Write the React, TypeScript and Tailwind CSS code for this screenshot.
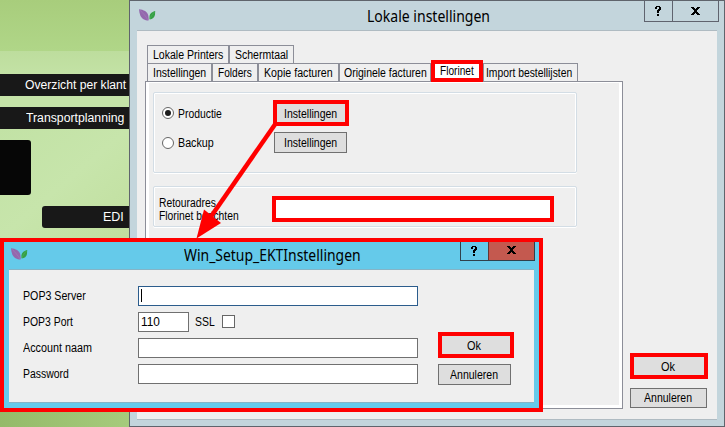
import { useLayoutEffect, useRef, useState } from "react";

/** Single line of text condensed or stretched to the width of its box. */
function Fit({ text, className }: { text: string; className: string }) {
  const inner = useRef<HTMLSpanElement>(null);
  const [scale, setScale] = useState(1);
  useLayoutEffect(() => {
    const el = inner.current;
    if (el && el.parentElement && el.offsetWidth > 0) {
      setScale(el.parentElement.clientWidth / el.offsetWidth);
    }
  }, [text]);
  return (
    <span className={`block shrink-0 whitespace-pre ${className}`}>
      <span ref={inner} className="inline-block origin-left" style={{ transform: `scaleX(${scale})` }}>
        {text}
      </span>
    </span>
  );
}

function Logo() {
  return (
    <svg width="17" height="13" viewBox="0 0 17 13" className="block shrink-0">
      <path d="M0 .3C4.500.5 8.700 3 9.300 6.500 9.600 8.500 9.900 10.200 9.500 11.500 6 11.500 2.500 9.500 1.300 6.500.5 4.500.2 2.500 0 .3Z" fill="#9468ad" />
      <path d="M1 1.200C4 4 7 7.500 9 11" stroke="#a37fb8" strokeWidth=".6" fill="none" />
      <path d="M16.200 2C13.500 2.500 10.800 4.500 10.500 7.300 10.400 8.700 10.400 9.700 10.700 10.500 13.500 10.300 15.600 8.500 16 5.800Z" fill="#35a045" />
      <path d="M15.500 3C13.500 5 11.800 7.500 10.900 10" stroke="#55b060" strokeWidth=".6" fill="none" />
    </svg>
  );
}

function HelpGlyph() {
  return (
    <svg width="7" height="10" viewBox="0 0 7 10" className="block" shapeRendering="crispEdges">
      <path d="M1 0h4v1h1v3h-1v1h-1v2h-2v-3h1v-1h1v-2h-2v2h-2v-2h1zM2 8h2v2h-2z" fill="#000" />
    </svg>
  );
}

function CloseGlyph() {
  return (
    <svg width="9" height="8" viewBox="0 0 9 8" className="block" shapeRendering="crispEdges">
      <path d="M0 0h3v1h1v1h1v-1h1v-1h3v1h-1v1h-1v1h-1v2h1v1h1v1h1v1h-3v-1h-1v-1h-1v1h-1v1h-3v-1h1v-1h1v-1h1v-2h-1v-1h-1v-1h-1z" fill="#000" />
    </svg>
  );
}

function Tab({ text, box, label }: { text: string; box: string; label: string }) {
  return (
    <div className={`flex h-[18px] shrink-0 border border-b-0 border-[#8c8e98] bg-[#efefef] leading-[18px] ${box}`}>
      <Fit text={text} className={label} />
    </div>
  );
}

function Radio({ checked }: { checked?: boolean }) {
  return (
    <span className="flex size-3 shrink-0 items-center justify-center rounded-full border border-[#666] bg-white">
      {checked && <span className="size-1.5 rounded-full bg-[#1c1c1c]" />}
    </span>
  );
}

function Desktop() {
  return (
    <div className="flex h-[427px] w-[129px] shrink-0 flex-col bg-[#c5e3a8] text-[12.5px] text-white">
      <div className="h-[51px] bg-linear-to-b from-[#a8cd7c] to-[#b0d688]" />
      <div className="h-[23px] bg-linear-to-b from-[#bddd9d] to-[#c3e2a5]" />
      <div className="flex h-[22px] justify-end bg-[#181818] pr-[3px] leading-[23px]">
        <Fit text="Overzicht per klant" className="w-[101px]" />
      </div>
      <div className="mt-[11px] flex h-[22px] justify-end bg-[#181818] pr-[5px] leading-[23px]">
        <Fit text="Transportplanning" className="w-[98px]" />
      </div>
      <div className="bg-linear-to-br from-[#c2e2a5] via-[#c7e5ab] to-[#c1df9f] pt-[11px] pb-2.5">
        <div className="h-[55px] w-[31px] rounded-r-[3px] bg-[#060606]" />
        <div className="mt-[11px] ml-[42px] flex h-[22px] justify-end rounded-l-[3px] bg-[#181818] pr-[5px] leading-[23px]">
          <Fit text="EDI" className="w-[21px]" />
        </div>
      </div>
      <div className="mt-auto h-[15px] bg-linear-to-r from-[#94ba69] to-[#a6cb7c]" />
    </div>
  );
}

function SettingsWindow() {
  return (
    <div className="flex h-[427px] w-[596px] shrink-0 flex-col border border-[#5f646c] bg-[#c3d5dc] px-[7px]">
      <div className="flex h-[29px] shrink-0">
        <div className="mt-2 ml-[2px] w-[228px]">
          <Logo />
        </div>
        <div className="font-['Noto_Sans'] text-[15.500px] leading-[31px]">
          <Fit text="Lokale instellingen" className="w-[123px]" />
        </div>
        <div className="-mr-[2px] ml-auto flex h-[21px] w-[75px] border border-t-0 border-[#5f636e]">
          <div className="flex w-7 items-center justify-center border-r border-[#5f636e]">
            <HelpGlyph />
          </div>
          <div className="flex flex-1 items-center justify-center">
            <CloseGlyph />
          </div>
        </div>
      </div>
      <div className="flex h-[390px] shrink-0 border-y border-[#afbbc2] bg-[#efefef] pl-2">
        <div className="flex w-[478px] flex-col pt-3.5">
          <div className="ml-[2px] flex">
            <Tab text="Lokale Printers" box="w-[82px] pl-[5px]" label="w-[70px]" />
            <Tab text="Schermtaal" box="w-[65px] border-r pl-[5px]" label="w-[53px]" />
          </div>
          <div className="ml-[2px] flex h-[18px] items-end">
            <Tab text="Instellingen" box="w-[65px] pl-[5px]" label="w-[53px]" />
            <Tab text="Folders" box="w-[46px] pl-[5px]" label="w-[34px]" />
            <Tab text="Kopie facturen" box="w-[81px] pl-[5px]" label="w-[69px]" />
            <Tab text="Originele facturen" box="w-[92px] pl-1" label="w-[83px]" />
            <div className="z-10 -mb-px flex h-[22px] w-[52px] shrink-0 border-4 border-[#f00] bg-white pl-[5px] leading-[14px]">
              <Fit text="Florinet" className="w-[34px]" />
            </div>
            <Tab text="Import bestellijsten" box="w-[95px] pl-[2px]" label="w-[86px]" />
          </div>
          <div className="h-[328px] border border-[#8c8e98] bg-white px-[3px] pt-px pb-[3px]">
            <div className="h-full bg-[#efefef] pt-[9px] pl-1">
              <div className="h-[81px] w-[424px] rounded-[2px] border border-[#d3dde5] pt-[7px] pl-2 shadow-[inset_0_1px_0_#fff,inset_1px_0_0_#fff,inset_-1px_0_0_#fff,0_1px_0_#fff]">
                <div className="flex h-[26px] items-center">
                  <Radio checked />
                  <Fit text="Productie" className="ml-1 w-11 pt-[2px]" />
                  <div className="ml-[51px] flex h-[26px] w-[76px] border-4 border-[#f00] bg-[#dedede] pl-[7px] leading-[20px]">
                    <Fit text="Instellingen" className="w-[53px]" />
                  </div>
                </div>
                <div className="mt-1.5 flex h-[21px] items-center">
                  <Radio />
                  <Fit text="Backup" className="ml-1 w-9 pt-[2px]" />
                  <div className="ml-[60px] flex h-[21px] w-[73px] border border-[#707070] bg-[#dedede] pl-[9px] leading-[20px]">
                    <Fit text="Instellingen" className="w-[53px]" />
                  </div>
                </div>
              </div>
              <div className="mt-[13px] flex h-[41px] w-[424px] rounded-[2px] border border-[#d3dde5] pt-[9px] pl-[5px] shadow-[inset_0_1px_0_#fff,inset_1px_0_0_#fff,inset_-1px_0_0_#fff,0_1px_0_#fff]">
                <div className="w-[113px] pt-px leading-[13px]">
                  <Fit text="Retouradres" className="w-[57px]" />
                  <Fit text="Florinet berichten" className="w-[80px]" />
                </div>
                <div className="h-[26px] w-[282px] border-4 border-[#f00] bg-white" />
              </div>
            </div>
          </div>
        </div>
        <div className="flex flex-1 flex-col pt-[322px] pl-[7px]">
          <div className="flex h-[26px] w-[78px] justify-center border-4 border-[#f00] bg-[#dedede] pr-[3px] leading-[21px]">
            <Fit text="Ok" className="w-[14px]" />
          </div>
          <div className="mt-[9px] flex h-5 w-[77px] justify-center border border-[#707070] bg-[#dedede] pr-px leading-[19px]">
            <Fit text="Annuleren" className="w-[48px]" />
          </div>
        </div>
      </div>
    </div>
  );
}

function MailDialog() {
  return (
    <div className="absolute top-[238px] left-0 flex h-[174px] w-[543px] flex-col border-4 border-[#f00] bg-[#65caea] pr-[5px] pl-[5px]">
      <div className="flex h-[27px] shrink-0">
        <div className="mt-1.5 ml-[2px] w-[173px]">
          <Logo />
        </div>
        <div className="font-['Noto_Sans'] text-[15.500px] leading-[27px]">
          <Fit text="Win_Setup_EKTInstellingen" className="w-[177px]" />
        </div>
        <div className="-mr-px ml-auto flex h-[19px] w-[75px] border border-t-0 border-[#30414b]">
          <div className="flex w-[27px] justify-center pt-1">
            <HelpGlyph />
          </div>
          <div className="flex flex-1 justify-center border-l border-[#653633] bg-[#c4594f] pt-1">
            <CloseGlyph />
          </div>
        </div>
      </div>
      <div className="flex h-[134px] shrink-0 border-y border-[#85b4c6] bg-[#efefef]">
        <div className="flex w-[409px] flex-col gap-1.5 pt-4 pl-[14px] leading-5">
          <div className="flex h-5">
            <Fit text="POP3 Server" className="mr-[52px] w-[63px]" />
            <div className="h-5 w-[280px] border border-[#2b5c8c] bg-white pt-[2px] pl-[2px]">
              <div className="h-[13px] w-px bg-black" />
            </div>
          </div>
          <div className="flex h-5">
            <Fit text="POP3 Port" className="mr-[65px] w-[50px]" />
            <div className="h-5 w-[51px] border border-[#707070] bg-white pl-[2px] leading-[18px]">
              <Fit text="110" className="w-[19px]" />
            </div>
            <Fit text="SSL" className="ml-1.5 w-5" />
            <div className="mt-[3px] ml-[7px] size-[13px] border border-[#666] bg-white" />
          </div>
          <div className="flex h-5">
            <Fit text="Account naam" className="mr-[46px] w-[69px]" />
            <div className="h-5 w-[280px] border border-[#707070] bg-white" />
          </div>
          <div className="flex h-5">
            <Fit text="Password" className="mr-[69px] w-[46px]" />
            <div className="h-5 w-[280px] border border-[#707070] bg-white" />
          </div>
        </div>
        <div className="flex flex-col pt-[62px] pl-5">
          <div className="flex h-[26px] w-[76px] justify-center border-4 border-[#f00] bg-[#dedede] pr-1 leading-[21px]">
            <Fit text="Ok" className="w-[14px]" />
          </div>
          <div className="mt-1.5 flex h-[21px] w-[73px] justify-center border border-[#707070] bg-[#dedede] pr-px leading-[20px]">
            <Fit text="Annuleren" className="w-[48px]" />
          </div>
        </div>
      </div>
    </div>
  );
}

export default function App() {
  return (
    <div className="relative flex h-[427px] w-[725px] overflow-hidden font-['Liberation_Sans',sans-serif] text-[12.5px] text-black">
      <Desktop />
      <SettingsWindow />
      <MailDialog />
      <svg className="pointer-events-none absolute top-0 left-0 z-20" width="725" height="427">
        <path d="M276 123 210 218" stroke="#f00" strokeWidth="4.500" />
        <path d="M196.500 238.500 204 209.500 221 223Z" fill="#f00" />
      </svg>
    </div>
  );
}
